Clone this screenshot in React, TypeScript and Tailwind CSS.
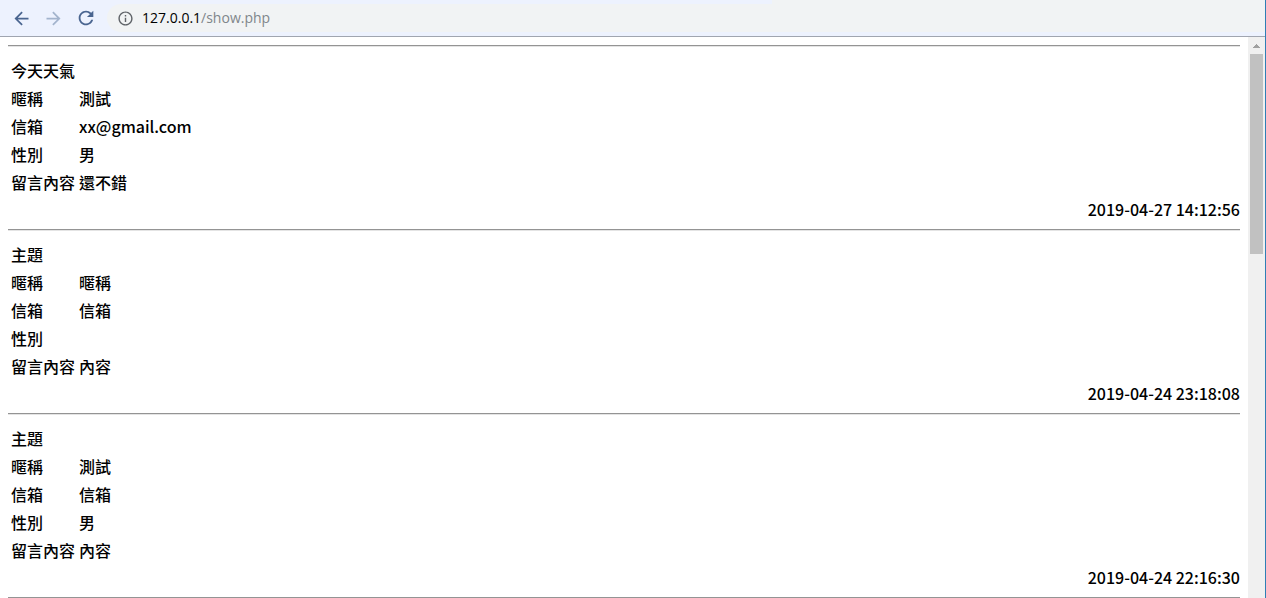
import { MdArrowBack, MdArrowForward, MdOutlineInfo, MdRefresh } from "react-icons/md";

type Message = {
  subject: string;
  name: string;
  email: string;
  gender: string;
  content: string;
  time: string;
};

const messages: Message[] = [
  { subject: "今天天氣", name: "測試", email: "xx@gmail.com", gender: "男", content: "還不錯", time: "2019-04-27 14:12:56" },
  { subject: "主題", name: "暱稱", email: "信箱", gender: "", content: "內容", time: "2019-04-24 23:18:08" },
  { subject: "主題", name: "測試", email: "信箱", gender: "男", content: "內容", time: "2019-04-24 22:16:30" },
];

function Rule() {
  return <hr className="h-[2px] shrink-0 border-t border-b border-t-[#949494] border-b-[#e4e4e4]" />;
}

function Row({ label, value }: { label: string; value: string }) {
  return (
    <tr className="h-[26px]">
      <th scope="row" className="p-px text-left font-medium">{label}</th>
      <td className="p-px">{value}</td>
    </tr>
  );
}

function Entry({ message }: { message: Message }) {
  return (
    <article>
      <table className="mt-2 border-separate border-spacing-[2px]">
        <tbody>
          <tr className="h-[26px]">
            <th colSpan={2} className="p-px text-left font-medium">{message.subject}</th>
          </tr>
          <Row label="暱稱" value={message.name} />
          <Row label="信箱" value={message.email} />
          <Row label="性別" value={message.gender} />
          <Row label="留言內容" value={message.content} />
        </tbody>
      </table>
      <p className="mb-2 text-right">{message.time}</p>
      <Rule />
    </article>
  );
}

function Toolbar() {
  return (
    <header className="flex h-[37px] shrink-0 items-center border-b border-[#a0a5b0] bg-[#edf2fe] bg-[linear-gradient(to_right,#edf2fe_61%,#f1f3f4_61%)] bg-[length:100%_4px] bg-no-repeat pl-[11px]">
      <nav className="flex items-center gap-[11px] text-[#4a6590]">
        <button type="button" aria-label="Back"><MdArrowBack size={21} /></button>
        <button type="button" aria-label="Forward" className="text-[#a3b4cd]"><MdArrowForward size={21} /></button>
        <button type="button" aria-label="Reload"><MdRefresh size={22} /></button>
      </nav>
      <div className="ml-[10px] flex h-7 flex-1 items-center rounded-l-full bg-[#f1f3f4] pl-[10px]">
        <button type="button" aria-label="Site information" className="text-[#5f6368]"><MdOutlineInfo size={17} /></button>
        <a href="#" className="ml-2 font-['Open_Sans',sans-serif] text-[14px] leading-5 text-[#80868b]">
          <span className="text-black">127.0.0.1</span>/show.php
        </a>
      </div>
    </header>
  );
}

function Scrollbar() {
  return (
    <div className="flex w-[17px] shrink-0 flex-col items-center bg-[#f0f0f0]">
      <button type="button" aria-label="Scroll up" className="flex h-[17px] w-full shrink-0 items-center justify-center">
        <svg width="7" height="4" viewBox="0 0 7 4" fill="#a0a0a0" aria-hidden="true">
          <path d="M3 0h1v1h1v1h1v1h1v1H0V3h1V2h1V1h1z" />
        </svg>
      </button>
      <div className="h-[200px] w-[13px] shrink-0 bg-[#c1c1c1]" />
    </div>
  );
}

export default function App() {
  return (
    <div className="flex h-screen flex-col overflow-hidden border-r border-r-[#2f7fb5] bg-white font-['Noto_Sans_CJK_TC',sans-serif] text-[16px] leading-6 font-medium text-black">
      <Toolbar />
      <div className="flex min-h-0 flex-1">
        <main className="min-w-0 flex-1 overflow-hidden px-2 pt-2">
          <Rule />
          {messages.map((message) => (
            <Entry key={message.time} message={message} />
          ))}
        </main>
        <Scrollbar />
      </div>
    </div>
  );
}
